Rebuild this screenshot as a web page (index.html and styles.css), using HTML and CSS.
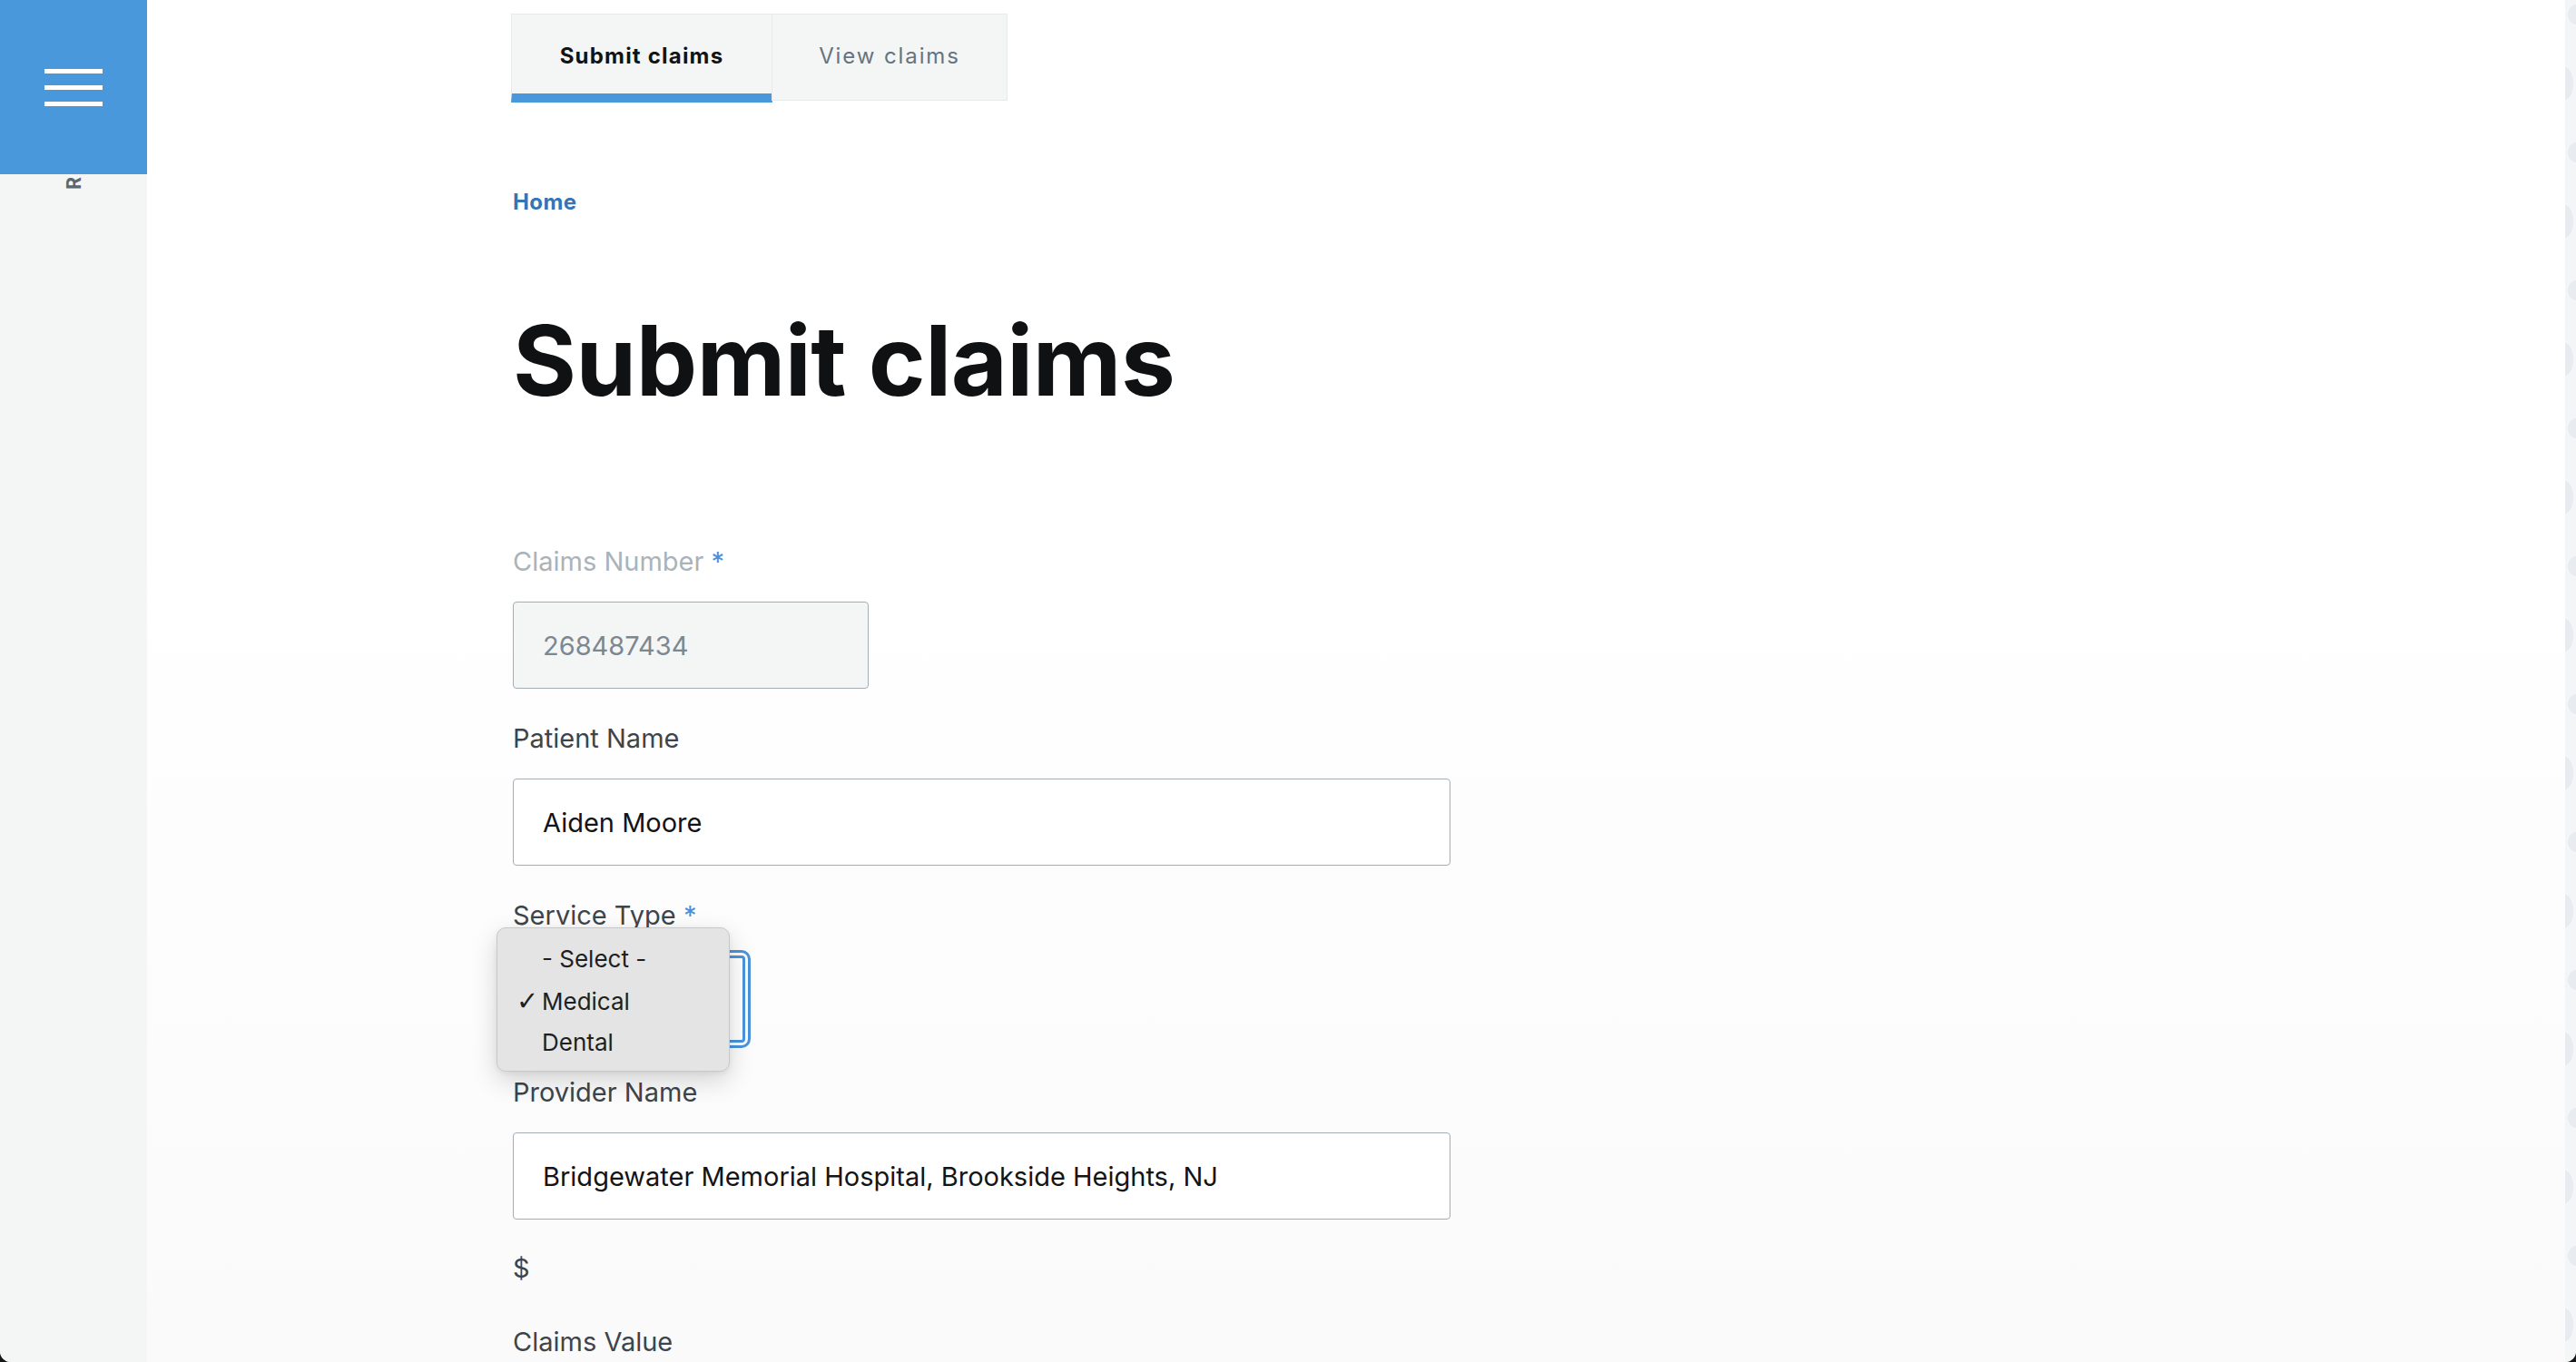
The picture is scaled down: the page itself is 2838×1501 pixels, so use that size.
FILE: index.html
```html
<!DOCTYPE html>
<html lang="en">
<head>
<meta charset="utf-8">
<title>Submit claims</title>
<link rel="stylesheet" href="styles.css">
</head>
<body>
<div class="app">
  <aside class="sidebar">
    <div class="menu-btn" aria-label="Menu"><span></span><span></span><span></span></div>
    <div class="side-label"><span>R</span></div>
  </aside>
  <main class="main">
    <nav class="tabs">
      <a class="tab active">Submit claims</a>
      <a class="tab">View claims</a>
    </nav>
    <a class="crumb">Home</a>
    <h1 class="title">Submit claims</h1>
    <form class="form">
      <div class="field">
        <label class="label muted">Claims Number <span class="req">*</span></label>
        <input class="input input-disabled" type="text" value="268487434" disabled>
      </div>
      <div class="field">
        <label class="label">Patient Name</label>
        <input class="input input-wide" type="text" value="Aiden Moore">
      </div>
      <div class="field">
        <label class="label">Service Type <span class="req">*</span></label>
        <div class="select-wrap">
          <select class="select">
            <option>- Select -</option>
            <option selected>Medical</option>
            <option>Dental</option>
          </select>
          <div class="menu">
            <div class="menu-item"><span class="check"></span>- Select -</div>
            <div class="menu-item"><span class="check">✓</span>Medical</div>
            <div class="menu-item"><span class="check"></span>Dental</div>
          </div>
        </div>
      </div>
      <div class="field">
        <label class="label">Provider Name</label>
        <input class="input input-wide" type="text" value="Bridgewater Memorial Hospital, Brookside Heights, NJ">
      </div>
      <div class="prefix">$</div>
      <div class="field">
        <label class="label">Claims Value</label>
        <input class="input input-wide" type="text" value="">
      </div>
    </form>
  </main>
  <div class="rail"></div>
</div>
</body>
</html>
```

FILE: styles.css
```css
html, body {
  margin: 0;
  padding: 0;
  height: 100%;
  background: #161616;
}

.app {
  display: flex;
  height: 100vh;
  overflow: hidden;
  background: #ffffff;
  border-radius: 0 0 12px 12px;
  font-family: "Inter", "Liberation Sans", sans-serif;
}

/* Sidebar */
.sidebar {
  flex: none;
  width: 162px;
  background: #f4f6f6;
  display: flex;
  flex-direction: column;
}

.menu-btn {
  height: 192px;
  background: #4a98dc;
  display: flex;
  flex-direction: column;
  align-items: center;
  justify-content: center;
  gap: 13px;
}

.menu-btn span {
  display: block;
  width: 64px;
  height: 5px;
  background: #ffffff;
}

.side-label {
  display: flex;
  justify-content: center;
  padding: 3px 0 0 2px;
}

.side-label span {
  writing-mode: vertical-rl;
  transform: rotate(180deg);
  font-weight: 700;
  font-size: 21px;
  line-height: 22px;
  color: #5b6670;
  white-space: nowrap;
}

/* Main */
.main {
  flex: 1;
  min-width: 0;
  padding-left: 403px;
  background: linear-gradient(#ffffff 0%, #ffffff 40%, #fafafa 100%);
}

.tabs {
  display: flex;
  align-items: flex-start;
  margin: 15px 0 0 -2px;
}

.tab {
  box-sizing: border-box;
  height: 96px;
  padding-bottom: 4px;
  display: flex;
  align-items: center;
  justify-content: center;
  background: #f4f6f6;
  border: 1px solid #e6eaed;
  font-size: 24px;
  letter-spacing: 1.9px;
  color: #66747f;
  cursor: pointer;
}

.tab.active {
  width: 288px;
  height: 98px;
  padding-top: 3px;
  padding-bottom: 0;
  border-bottom: 10px solid #4a98dc;
  font-weight: 700;
  color: #111315;
  letter-spacing: 1.2px;
}

.tab + .tab {
  width: 260px;
  margin-left: -1px;
}

.crumb {
  display: block;
  margin-top: 95px;
  font-size: 24px;
  line-height: 29px;
  font-weight: 700;
  color: #3574b5;
  letter-spacing: 0.4px;
}

.title {
  margin: 96px 0 0;
  font-size: 107px;
  line-height: 128px;
  font-weight: 700;
  color: #0f1113;
  letter-spacing: -0.5px;
}

/* Form */
.form {
  margin-top: 141px;
}

.field {
  margin-bottom: 38px;
}

.label {
  display: block;
  margin-bottom: 27px;
  font-size: 29px;
  line-height: 34px;
  color: #3d454b;
}

.label.muted {
  color: #a9b3ba;
}

.req {
  color: #4a90d9;
}

.input {
  display: block;
  box-sizing: border-box;
  height: 96px;
  padding: 0 32px;
  border: 1px solid #a4adb5;
  border-radius: 4px;
  background: #ffffff;
  font-family: "Inter", "Liberation Sans", sans-serif;
  font-size: 29px;
  color: #121416;
  outline: none;
}

.input-disabled {
  width: 392px;
  background: #f4f6f6;
  color: #7c8891;
}

.input-wide {
  width: 1033px;
}

.select-wrap {
  position: relative;
  width: 256px;
}

.select {
  display: block;
  box-sizing: border-box;
  width: 256px;
  height: 96px;
  appearance: none;
  -webkit-appearance: none;
  background: #ffffff;
  border: 3px solid #4a93dc;
  border-radius: 4px;
  outline: 3px solid #4a93dc;
  outline-offset: 3px;
  padding: 0 32px;
  font-family: "Inter", "Liberation Sans", sans-serif;
  font-size: 29px;
  color: #121416;
}

.menu {
  position: absolute;
  left: -18px;
  top: -31px;
  box-sizing: border-box;
  width: 257px;
  height: 159px;
  padding-top: 11px;
  background: #e4e4e4;
  border: 1px solid #c8c8c8;
  border-radius: 10px;
  box-shadow: 0 10px 28px rgba(0, 0, 0, 0.16), 0 2px 6px rgba(0, 0, 0, 0.06);
  font-family: "Inter", "Noto Sans", sans-serif;
  font-size: 26px;
  color: #1f1f1f;
}

.menu-item {
  display: flex;
  align-items: baseline;
  height: 46px;
  line-height: 46px;
  padding-left: 21px;
  white-space: nowrap;
}

.check {
  display: inline-block;
  width: 28px;
  font-family: "DejaVu Sans", sans-serif;
  font-size: 29px;
  font-weight: 700;
}

.prefix {
  margin-top: -1px;
  margin-bottom: 47px;
  font-size: 29px;
  line-height: 34px;
  color: #3d454b;
}

/* Right rail */
.rail {
  flex: none;
  width: 12px;
  background-color: #f4f5f6;
  background-image:
    radial-gradient(ellipse 9px 18px at 0 92px, #e8ebf0 97%, rgba(232, 235, 240, 0) 100%),
    radial-gradient(circle 12px at 15px 16px, #e8ebf0 97%, rgba(232, 235, 240, 0) 100%);
  background-size: 12px 152px, 12px 152px;
  background-repeat: repeat-y;
}
```
